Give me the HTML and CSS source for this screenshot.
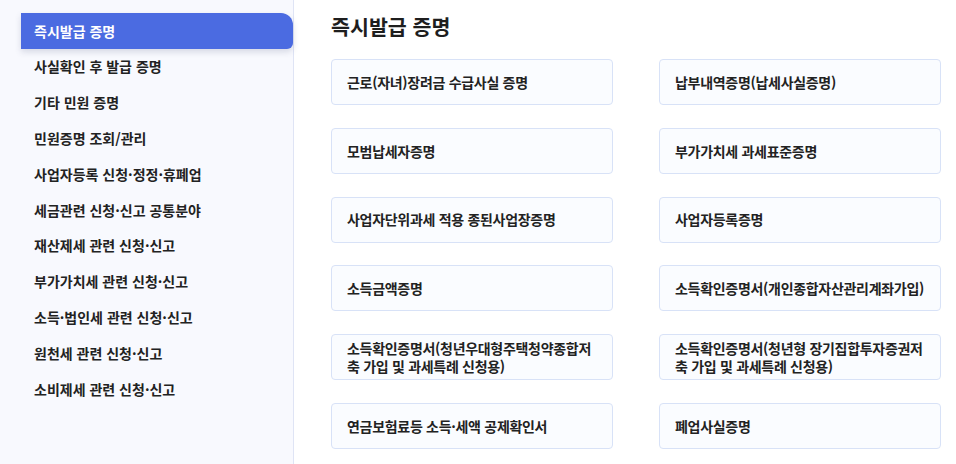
FILE: index.html
```html
<!DOCTYPE html>
<html lang="ko">
<head>
<meta charset="utf-8">
<title>즉시발급 증명</title>
<link rel="stylesheet" href="styles.css">
</head>
<body>
<div class="layout">
  <aside class="sidebar">
    <ul class="menu">
      <li class="menu-item active">즉시발급 증명</li>
      <li class="menu-item">사실확인 후 발급 증명</li>
      <li class="menu-item">기타 민원 증명</li>
      <li class="menu-item">민원증명 조회/관리</li>
      <li class="menu-item">사업자등록 신청·정정·휴폐업</li>
      <li class="menu-item">세금관련 신청·신고 공통분야</li>
      <li class="menu-item">재산제세 관련 신청·신고</li>
      <li class="menu-item">부가가치세 관련 신청·신고</li>
      <li class="menu-item">소득·법인세 관련 신청·신고</li>
      <li class="menu-item">원천세 관련 신청·신고</li>
      <li class="menu-item">소비제세 관련 신청·신고</li>
    </ul>
  </aside>
  <main class="content">
    <h1 class="title">즉시발급 증명</h1>
    <div class="cards">
      <div class="card">근로(자녀)장려금 수급사실 증명</div>
      <div class="card">납부내역증명(납세사실증명)</div>
      <div class="card">모범납세자증명</div>
      <div class="card">부가가치세 과세표준증명</div>
      <div class="card">사업자단위과세 적용 종된사업장증명</div>
      <div class="card">사업자등록증명</div>
      <div class="card">소득금액증명</div>
      <div class="card">소득확인증명서(개인종합자산관리계좌가입)</div>
      <div class="card">소득확인증명서(청년우대형주택청약종합저축 가입 및 과세특례 신청용)</div>
      <div class="card">소득확인증명서(청년형 장기집합투자증권저축 가입 및 과세특례 신청용)</div>
      <div class="card">연금보험료등 소득·세액 공제확인서</div>
      <div class="card">폐업사실증명</div>
    </div>
  </main>
</div>
</body>
</html>
```

FILE: styles.css
```css
* { box-sizing: border-box; }
html, body {
  margin: 0;
  padding: 0;
  background: #ffffff;
  font-family: "Noto Sans CJK KR", "Noto Sans", sans-serif;
  color: #1f1f1f;
}
.layout {
  display: flex;
  width: 956px;
  height: 464px;
  overflow: hidden;
}
.sidebar {
  width: 294px;
  flex: 0 0 294px;
  background: #f8f9fe;
  border-right: 1px solid #dfe4f5;
  padding-top: 13px;
  padding-left: 21px;
}
.menu {
  list-style: none;
  margin: 0;
  padding: 0;
}
.menu-item {
  height: 35.9px;
  line-height: 35.9px;
  padding-left: 13px;
  font-size: 14px;
  font-weight: 600;
  color: #222222;
  white-space: nowrap;
}
.menu-item.active {
  height: 36px;
  line-height: 36px;
  background: #4b6be1;
  color: #ffffff;
  font-weight: 700;
  border-radius: 0 12px 6px 0;
  box-shadow: 0 3px 6px rgba(60, 70, 110, 0.18);
}
.content {
  flex: 1;
  padding: 12px 0 0 37px;
}
.title {
  margin: 0;
  font-size: 20.6px;
  line-height: 28px;
  font-weight: 700;
  color: #1e1e1e;
}
.cards {
  margin-top: 19px;
  display: grid;
  grid-template-columns: 282px 282px;
  column-gap: 46px;
  row-gap: 22.75px;
}
.card {
  height: 46px;
  display: flex;
  align-items: center;
  padding: 0 12px 0 15px;
  background: #fafcff;
  border: 1px solid #d8e2f7;
  border-radius: 4px;
  font-size: 14px;
  font-weight: 600;
  letter-spacing: -0.3px;
  line-height: 18.5px;
  color: #222222;
}
```
